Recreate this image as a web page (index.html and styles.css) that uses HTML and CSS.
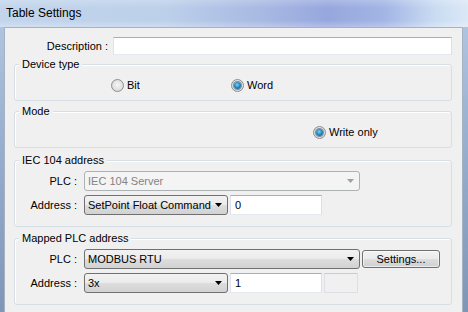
FILE: index.html
```
<!DOCTYPE html>
<html>
  <head>
    <meta charset="utf-8" />
    <link rel="stylesheet" href="styles.css">
  </head>
  <body>
    <div class="window">
      <div class="titlebar">Table Settings</div>

      <div class="client">
        <div class="desc-row">
          <span class="desc-label">Description :</span>
          <div class="textbox desc-input"></div>
        </div>

        <div class="group device-group">
          <div class="group-title">Device type</div>
          <div class="radio-row device-radios">
            <span class="option opt-bit"><span class="radio"></span>Bit</span>
            <span class="option"><span class="radio on"></span>Word</span>
          </div>
        </div>

        <div class="group mode-group">
          <div class="group-title">Mode</div>
          <div class="radio-row mode-radios">
            <span class="option"><span class="radio on"></span>Write only</span>
          </div>
        </div>

        <div class="group iec-group">
          <div class="group-title">IEC 104 address</div>
          <div class="field-row">
            <span class="field-label">PLC :</span>
            <div class="select wide disabled">
              <span>IEC 104 Server</span>
              <svg class="arrow" width="7" height="4" viewBox="0 0 7 4"><path d="M0 0h7L3.5 4z" /></svg>
            </div>
          </div>
          <div class="field-row">
            <span class="field-label">Address :</span>
            <div class="select narrow">
              <span>SetPoint Float Command</span>
              <svg class="arrow" width="7" height="4" viewBox="0 0 7 4"><path d="M0 0h7L3.5 4z" /></svg>
            </div>
            <div class="textbox addr-input">0</div>
          </div>
        </div>

        <div class="group mapped-group">
          <div class="group-title">Mapped PLC address</div>
          <div class="field-row">
            <span class="field-label">PLC :</span>
            <div class="select wide">
              <span>MODBUS RTU</span>
              <svg class="arrow" width="7" height="4" viewBox="0 0 7 4"><path d="M0 0h7L3.5 4z" /></svg>
            </div>
            <div class="button">Settings...</div>
          </div>
          <div class="field-row">
            <span class="field-label">Address :</span>
            <div class="select narrow">
              <span>3x</span>
              <svg class="arrow" width="7" height="4" viewBox="0 0 7 4"><path d="M0 0h7L3.5 4z" /></svg>
            </div>
            <div class="textbox addr-input">1</div>
            <div class="textbox off-box"></div>
          </div>
        </div>
      </div>
    </div>
  </body>
</html>
```

FILE: styles.css
```
* {
  margin: 0;
  padding: 0;
  box-sizing: border-box;
}

body {
  width: 468px;
  height: 312px;
  overflow: hidden;
  font-family: "Liberation Sans", Arial, sans-serif;
  font-size: 11px;
  color: #000;
}

/* Window frame */
.window {
  width: 468px;
  height: 312px;
  display: flex;
  flex-direction: column;
  background: linear-gradient(180deg, #b4c9e4 0%, #98afcf 45%, #7f96b6 100%);
}

.titlebar {
  height: 27px;
  padding-left: 6px;
  line-height: 26px;
  font-size: 12px;
  color: #000;
  background:
    linear-gradient(180deg, rgba(255, 255, 255, 0.2) 0%, rgba(255, 255, 255, 0) 30%, rgba(255, 255, 255, 0) 75%, rgba(255, 255, 255, 0.25) 100%),
    linear-gradient(90deg, #c2d5ec 0%, #bdd0ea 35%, #a9bae3 55%, #97a7de 70%, #a2b5e4 82%, #cadcf2 93%, #dbe8f6 100%);
}

.client {
  flex: 1;
  margin: 0 5px 0 4px;
  padding: 9px 10px 0 9px;
  background: #f0f0f0;
  border: 1px solid #a5b2c3;
  border-bottom: 0;
}

/* Description */
.desc-row {
  display: flex;
  align-items: center;
  height: 18px;
}

.desc-label {
  width: 99px;
  padding-right: 5px;
  text-align: right;
}

.textbox {
  background: #fff;
  border: 1px solid;
  border-color: #abadb3 #dbdfe6 #e3e9ef #e2e3ea;
  padding-left: 4px;
  display: flex;
  align-items: center;
}

.desc-input {
  flex: 1;
  height: 18px;
}

/* Group boxes */
.group {
  border: 1px solid #d5dfe5;
  border-radius: 3px;
  box-shadow: inset 1px 1px 0 #fff;
}

.group-title {
  width: fit-content;
  margin: -8px 0 0 4px;
  padding: 0 3px;
  line-height: 14px;
  background: #f0f0f0;
}

.device-group {
  margin-top: 9px;
  padding-bottom: 7px;
}

.mode-group {
  margin-top: 10px;
  padding-bottom: 7px;
}

.iec-group {
  margin-top: 12px;
  padding-bottom: 11px;
}

.mapped-group {
  margin-top: 11px;
  padding-bottom: 11px;
}

/* Radio buttons */
.radio-row {
  display: flex;
  align-items: center;
  height: 16px;
  margin-top: 6px;
}

.device-radios {
  padding-left: 96px;
}

.mode-radios {
  padding-left: 298px;
}

.option {
  display: flex;
  align-items: center;
  gap: 3px;
}

.opt-bit {
  width: 120px;
}

.radio {
  width: 13px;
  height: 13px;
  border-radius: 50%;
  border: 1px solid #8d8e8e;
  background: radial-gradient(circle at 50% 45%, #f6f6f6 0%, #e2e2e2 55%, #cdcdcd 100%);
  display: flex;
  align-items: center;
  justify-content: center;
}

.radio.on::after {
  content: "";
  width: 7px;
  height: 7px;
  border-radius: 50%;
  background: radial-gradient(circle at 45% 40%, #7fd6f7 0%, #2a8bc4 45%, #134c78 100%);
  box-shadow: 0 0 0 1px rgba(20, 60, 95, 0.5);
}

/* Form rows */
.field-row {
  display: flex;
  align-items: center;
  height: 20px;
  margin-top: 4px;
}

.field-label {
  width: 69px;
  padding-right: 7px;
  text-align: right;
}

.select {
  height: 20px;
  display: flex;
  align-items: center;
  justify-content: space-between;
  padding: 0 5px 0 3px;
  border: 1px solid #707070;
  border-radius: 3px;
  background: linear-gradient(180deg, #f2f2f2 0%, #ebebeb 48%, #dddddd 52%, #d2d2d2 100%);
}

.select .arrow {
  fill: #000;
}

.select.wide {
  width: 276px;
}

.select.narrow {
  width: 144px;
}

.select.disabled {
  border-color: #adb2b5;
  background: #f4f4f4;
  color: #838383;
}

.select.disabled .arrow {
  fill: #a0a0a0;
}

.addr-input {
  width: 92px;
  height: 20px;
  margin-left: 2px;
}

.off-box {
  width: 34px;
  height: 20px;
  margin-left: 2px;
  background: #f0f0f0;
  border-color: #c9cbce #dcdfe3 #dcdfe3 #dcdfe3;
}

.button {
  width: 78px;
  height: 18px;
  margin-left: 2px;
  display: flex;
  align-items: center;
  justify-content: center;
  border: 1px solid #707070;
  border-radius: 3px;
  background: linear-gradient(180deg, #f2f2f2 0%, #ebebeb 48%, #dddddd 52%, #cfcfcf 100%);
  box-shadow: inset 0 0 0 1px rgba(255, 255, 255, 0.6);
}
```
